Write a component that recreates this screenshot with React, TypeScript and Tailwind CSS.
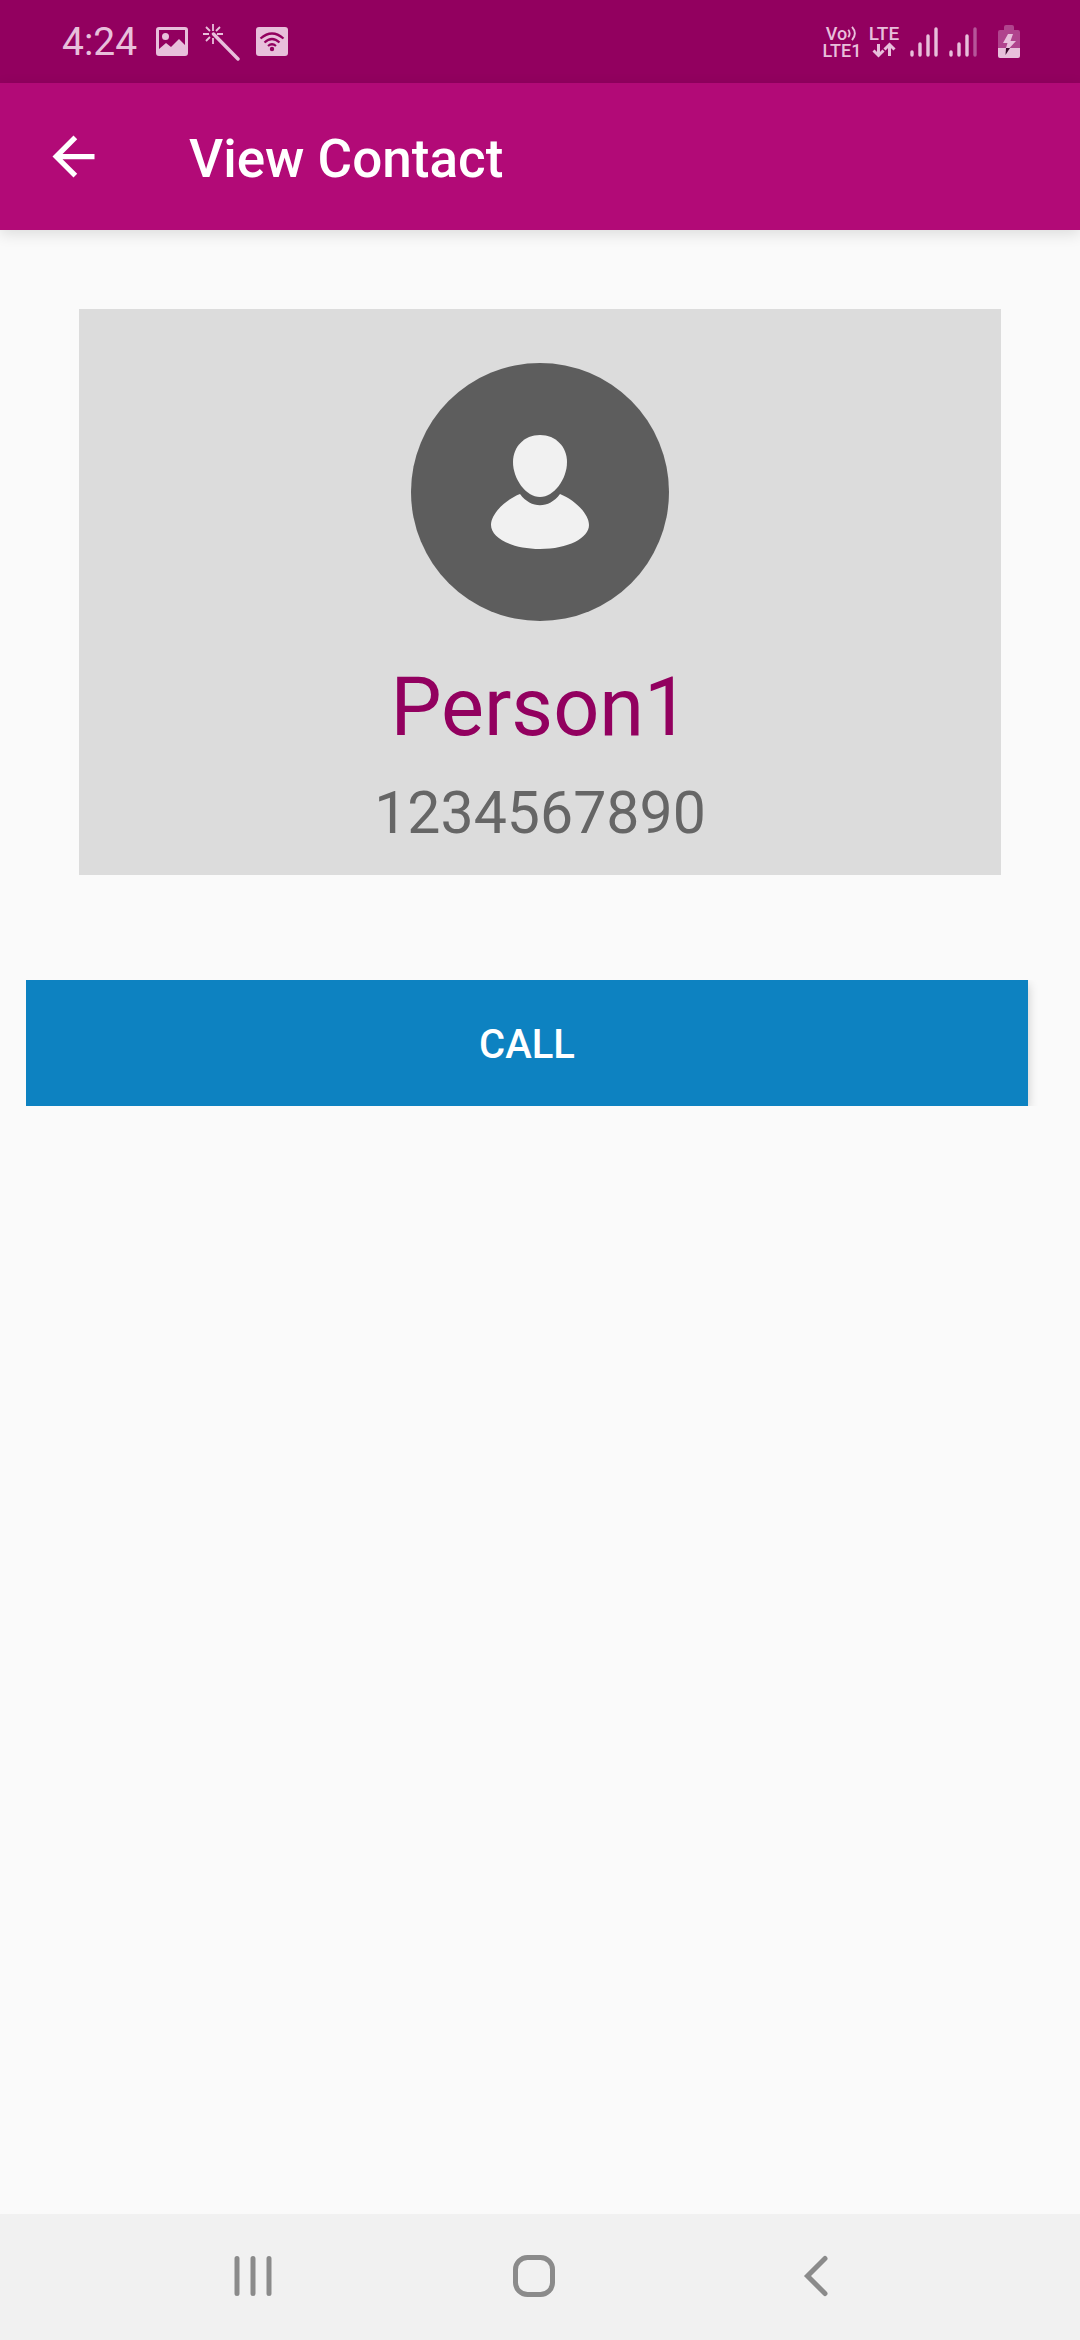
const light = "#e8bfdb";

function StatusBar() {
  return (
    <div className="flex h-[83px] items-center justify-between bg-[#92005f] pr-[60px] pl-[62px] text-[#e8bfdb]">
      <div className="flex items-center">
        <time className="w-[94px] text-[39px] leading-[48px]">4:24</time>
        <svg width="32" height="30" viewBox="0 0 32 30" aria-label="Screenshot saved">
          <path
            fill={light}
            fillRule="evenodd"
            d="M3 0H29Q32 0 32 3V26Q32 29 29 29H3Q0 29 0 26V3Q0 0 3 0ZM3 3V22L10 16L15 20L23 12L29 18V3ZM9.500 6A3.500 3.500 0 1 1 9.500 13A3.500 3.500 0 1 1 9.500 6Z"
          />
        </svg>
        <svg className="ml-[14px]" width="38" height="38" viewBox="0 0 38 38" fill="none" stroke={light} aria-label="Magic wand">
          <path strokeWidth="3.400" strokeLinecap="round" d="M11.500 11L36 36" />
          <path strokeWidth="1.800" d="M11 1v7M11 15v6M1 11h6M15 11h6M4 4l4 4M18 4l-4 4M4 18l4-4" />
        </svg>
        <svg className="ml-[16px]" width="32" height="30" viewBox="0 0 32 30" aria-label="Wi-Fi">
          <rect width="32" height="29" rx="3" fill={light} />
          <g fill="none" stroke="#92005f" strokeWidth="2.200">
            <path d="M4.500 11.500Q16 1.500 27.500 11.500" />
            <path d="M8.500 15.500Q16 8.500 23.500 15.500" />
            <path d="M12 19Q16 15.500 20 19" />
          </g>
          <circle cx="16" cy="22" r="2.200" fill="#92005f" />
        </svg>
      </div>
      <div className="flex items-center">
        <div className="flex w-[42px] flex-col items-center text-[18px] leading-[17px] font-medium">
          <span className="flex items-center">
            Vo
            <svg width="11" height="17" viewBox="0 0 11 18" fill="none" stroke={light} strokeWidth="2" aria-hidden="true">
              <path d="M1 5Q4 9 1 13M5 2Q11 9 5 16" />
            </svg>
          </span>
          <span>LTE1</span>
        </div>
        <div className="ml-[4px] flex w-[34px] flex-col items-center text-[19px] leading-[17px] font-medium">
          <span>LTE</span>
          <svg width="24" height="17" viewBox="0 0 24 17" fill="none" stroke={light} strokeWidth="3" aria-label="Data activity">
            <path d="M6.500 2V13M1.500 8.500L6.500 13.500L11.500 8.500M17.500 14V3M12.500 7.500L17.500 2.500L22.500 7.500" />
          </svg>
        </div>
        <svg className="ml-[9px]" width="28" height="30" viewBox="0 0 28 30" stroke={light} strokeWidth="3.400" strokeLinecap="round" aria-label="Signal, SIM 1">
          <path d="M2 25v3M10 17v11M18 9v19M26 2v26" />
        </svg>
        <svg className="ml-[11px]" width="28" height="30" viewBox="0 0 28 30" stroke={light} strokeWidth="3.400" strokeLinecap="round" aria-label="Signal, SIM 2">
          <path d="M2 25v3M10 17v11M18 9v19" />
          <path stroke="#b6559a" d="M26 2v26" />
        </svg>
        <svg className="ml-[21px]" width="22" height="33" viewBox="0 0 22 33" aria-label="Battery charging">
          <path fill="#b0448d" d="M6 2Q6 0 8 0H14Q16 0 16 2V5H20Q22 5 22 7V23H0V7Q0 5 2 5H6Z" />
          <path fill={light} d="M0 23H22V31Q22 33 20 33H2Q0 33 0 31Z" />
          <path fill={light} d="M10 9H15L12.500 16H18L11.500 23H8L9.500 18H5Z" />
          <path fill="#3c0a2e" d="M8 23H12L7.500 30Z" />
        </svg>
      </div>
    </div>
  );
}

function AppBar() {
  return (
    <header className="flex h-[147px] items-center bg-[#b20a77] pl-[42px] text-white shadow-[0_4px_14px_rgba(0,0,0,0.12)]">
      <button type="button" aria-label="Back">
        <svg width="63" height="63" viewBox="0 0 24 24" fill="currentColor">
          <path d="M20 11H7.830l5.590-5.590L12 4l-8 8 8 8 1.410-1.410L7.830 13H20z" />
        </svg>
      </button>
      <h1 className="ml-[84px] pt-[4px] text-[53px] leading-[62px] font-medium">View Contact</h1>
    </header>
  );
}

function ContactCard() {
  return (
    <section className="mx-[79px] mt-[79px] flex flex-col items-center bg-[#dcdcdc] pt-[54px] pb-[28px]">
      <svg width="258" height="258" viewBox="0 0 258 258" role="img" aria-label="Contact photo">
        <circle cx="129" cy="129" r="129" fill="#5d5d5d" />
        <g fill="#f1f1f1">
          <path d="M129 72C145 72 156 84 156 99C156 116 143 134 129 134C115 134 102 116 102 99C102 84 113 72 129 72Z" />
          <path d="M109 131C120 146 138 146 149 131C164 137 178 151 178 162C178 175 157 186 129 186C101 186 80 175 80 162C80 151 94 137 109 131Z" />
        </g>
      </svg>
      <h2 className="mt-[40px] text-[81px] leading-[94px] text-[#92005f]">Person1</h2>
      <p className="mt-[24px] text-[59px] leading-[68px] text-[#666666]">1234567890</p>
    </section>
  );
}

function NavigationBar() {
  return (
    <nav className="grid h-[126px] grid-cols-3 items-center justify-items-center bg-[#f1f1f1] pr-[123px] pb-[2px] pl-[112px] text-[#8b8b8b]">
      <button type="button" aria-label="Recent apps">
        <svg width="42" height="42" viewBox="0 0 42 42" stroke="currentColor" strokeWidth="5" strokeLinecap="round">
          <path d="M5 3.500v35M21 3.500v35M37 3.500v35" />
        </svg>
      </button>
      <button type="button" aria-label="Home">
        <svg width="42" height="42" viewBox="0 0 42 42" fill="none" stroke="currentColor" strokeWidth="5">
          <rect x="2.500" y="2.500" width="37" height="37" rx="12" />
        </svg>
      </button>
      <button type="button" aria-label="Back">
        <svg width="42" height="42" viewBox="0 0 42 42" fill="none" stroke="currentColor" strokeWidth="5" strokeLinecap="round">
          <path d="M30 3.500L12.500 21L30 38.500" />
        </svg>
      </button>
    </nav>
  );
}

export default function App() {
  return (
    <div className="flex min-h-screen flex-col bg-[#fafafa] font-['Roboto',sans-serif]">
      <StatusBar />
      <AppBar />
      <main className="flex flex-1 flex-col">
        <ContactCard />
        <div className="mt-[105px] mr-[26px] ml-[26px] overflow-hidden pr-[26px]">
          <button
            type="button"
            className="block h-[126px] w-full bg-[#0d82c1] pt-[4px] text-center text-[40px] leading-[46px] font-medium text-white shadow-[0_4px_10px_rgba(0,0,0,0.2)]"
          >
            CALL
          </button>
        </div>
      </main>
      <NavigationBar />
    </div>
  );
}
